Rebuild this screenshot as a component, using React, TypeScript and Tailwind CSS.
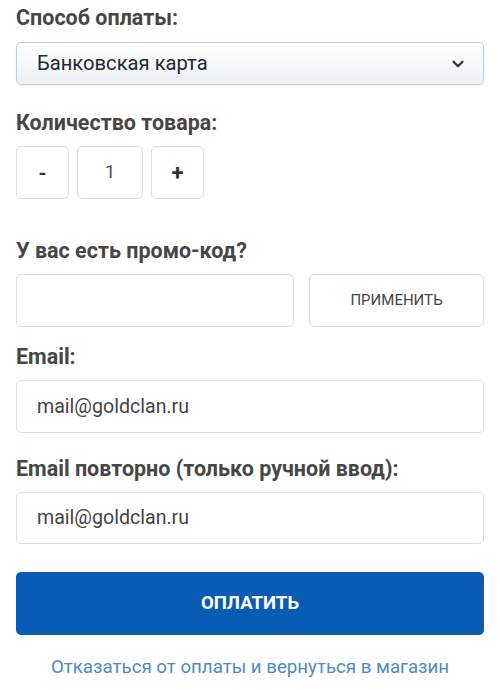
import { ChevronDown } from 'lucide-react';

const font = { fontFamily: 'Roboto, "Noto Sans", sans-serif' };

function Label({ children, className = '' }: { children: React.ReactNode; className?: string }) {
  return (
    <div className={`text-[21.5px] leading-[24px] font-bold text-[#464646] ${className}`}>
      {children}
    </div>
  );
}

export default function App() {
  return (
    <div className="w-[500px] h-[690px] bg-white px-4 overflow-hidden" style={font}>
      <Label className="pt-[6px]">Способ оплаты:</Label>

      <div className="mt-3 h-[43px] flex items-center justify-between rounded-[5px] border border-[#bcd0e2] bg-gradient-to-b from-white to-[#eef0f3] shadow-[0_1px_2px_rgba(0,0,0,0.08)] pl-[20px] pr-[16px]">
        <span className="text-[20.2px] text-[#1e2836]">Банковская карта</span>
        <ChevronDown className="w-[18px] h-[18px] text-[#333]" strokeWidth={3} />
      </div>

      <Label className="mt-[26px]">Количество товара:</Label>

      <div className="mt-[11px] flex gap-2">
        <button className="w-[53px] h-[53px] rounded-[5px] border border-[#dedede] text-[20px] font-bold text-[#333]">
          -
        </button>
        <div className="w-[66px] h-[53px] rounded-[5px] border border-[#dedede] flex items-center justify-center text-[19px] text-[#555]">
          1
        </div>
        <button className="w-[53px] h-[53px] rounded-[5px] border border-[#dedede] text-[22px] font-bold text-[#333]">
          +
        </button>
      </div>

      <Label className="mt-[40px]">У вас есть промо-код?</Label>

      <div className="mt-[11px] flex gap-[15px]">
        <div className="w-[278px] h-[53px] rounded-[5px] border border-[#dedede]" />
        <button className="flex-1 h-[53px] rounded-[5px] border border-[#dedede] text-[15px] text-[#444]">
          ПРИМЕНИТЬ
        </button>
      </div>

      <Label className="mt-[18px]">Email:</Label>

      <div className="mt-[11px] h-[53px] rounded-[5px] border border-[#dedede] flex items-center pl-[20px] text-[19.6px] text-[#444]">
        mail@goldclan.ru
      </div>

      <Label className="mt-[24px]">Email повторно (только ручной ввод):</Label>

      <div className="mt-[11px] h-[52px] rounded-[5px] border border-[#dedede] flex items-center pl-[20px] text-[19.6px] text-[#444]">
        mail@goldclan.ru
      </div>

      <button className="mt-[28px] w-full h-[63px] rounded-[5px] bg-[#0a5bb5] text-white text-[18.6px] font-bold">
        ОПЛАТИТЬ
      </button>

      <div className="mt-[20px] text-center text-[18.7px] leading-[24px] text-[#4b8cc3]">
        Отказаться от оплаты и вернуться в магазин
      </div>
    </div>
  );
}
